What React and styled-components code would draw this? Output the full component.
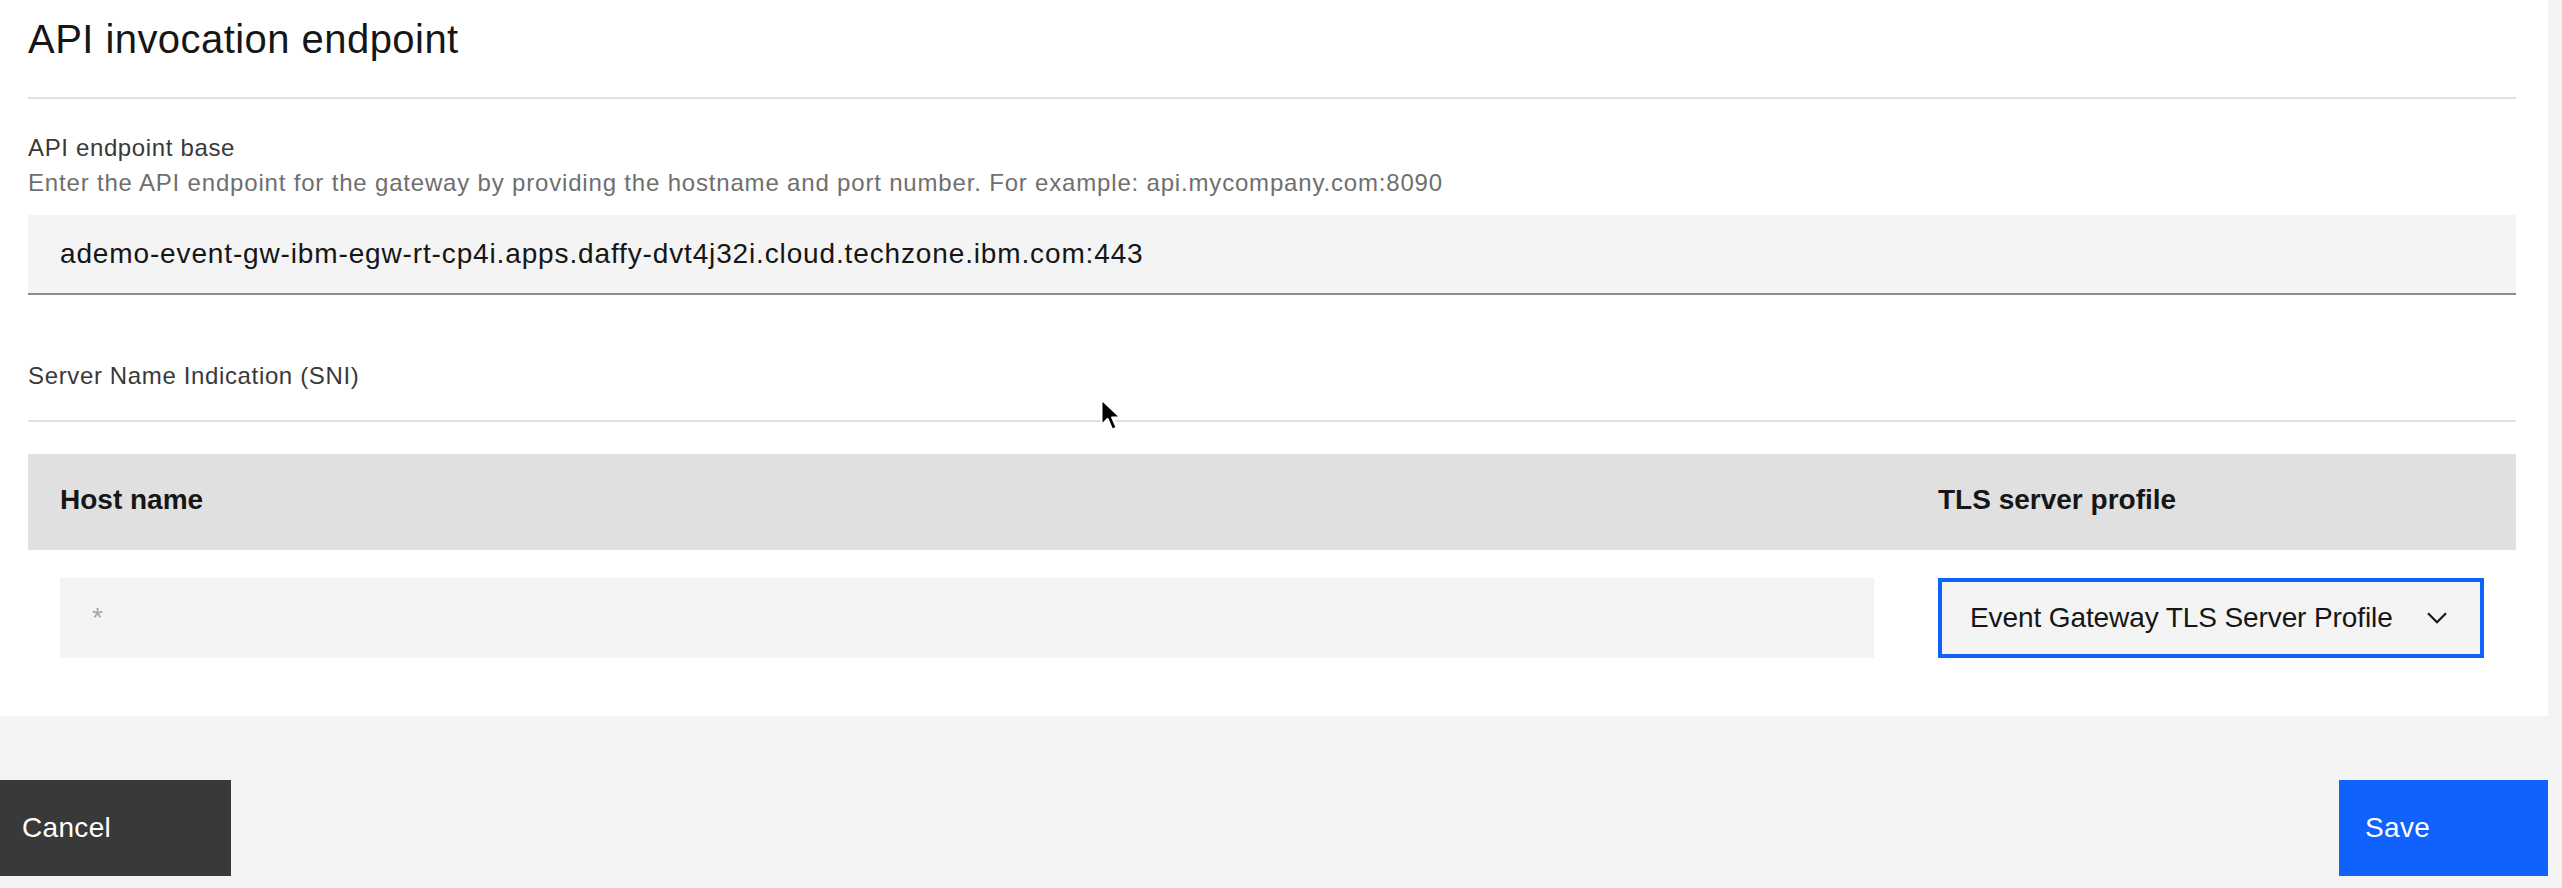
import React from "react";
import styled, { createGlobalStyle } from "styled-components";

const GlobalStyle = createGlobalStyle`
  body {
    margin: 0;
    background: #f4f4f4;
    font-family: "Liberation Sans", Arial, sans-serif;
  }
`;

const ChevronDown = () => (
  <svg width="20" height="12" viewBox="0 0 20 12" fill="none">
    <path d="M1 1.2 L10 10.2 L19 1.2" stroke="#161616" strokeWidth="2.2" />
  </svg>
);

const Pointer = () => (
  <svg width="26" height="38" viewBox="0 0 26 38">
    <path
      d="M1.5 1.5 L1.5 27 L7.6 21 L12.2 31.6 L16.6 29.7 L12.1 19.4 L20.5 19.4 Z"
      fill="#000"
      stroke="#fff"
      strokeWidth="2"
      strokeLinejoin="round"
    />
  </svg>
);

const App = () => {
  return (
    <>
      <GlobalStyle />
      <Page>
        <Panel>
          <Title>API invocation endpoint</Title>
          <Divider $top={30} />

          {/* endpoint base */}
          <Label $top={33}>API endpoint base</Label>
          <Helper>
            Enter the API endpoint for the gateway by providing the hostname and
            port number. For example: api.mycompany.com:8090
          </Helper>
          <TextInput
            readOnly
            value="ademo-event-gw-ibm-egw-rt-cp4i.apps.daffy-dvt4j32i.cloud.techzone.ibm.com:443"
          />

          {/* SNI table */}
          <Label $top={65}>Server Name Indication (SNI)</Label>
          <Divider $top={28} />
          <Table>
            <HeadCell>Host name</HeadCell>
            <HeadCell>TLS server profile</HeadCell>
            <Cell>
              <RowInput placeholder="*" />
            </Cell>
            <Cell>
              <SelectBox>
                <span>Event Gateway TLS Server Profile</span>
                <ChevronDown />
              </SelectBox>
            </Cell>
          </Table>
        </Panel>

        <Footer>
          <Button $kind="secondary" $width={231} $pad={22}>
            Cancel
          </Button>
          <Button $kind="primary" $width={209} $pad={26}>
            Save
          </Button>
        </Footer>

        <CursorMark>
          <Pointer />
        </CursorMark>
      </Page>
    </>
  );
};

const Page = styled.div`
  position: relative;
  width: 2548px;
  height: 888px;
  overflow: hidden;
`;

const Panel = styled.div`
  background: #ffffff;
  padding: 11px 32px 58px 28px;
`;

const Title = styled.h2`
  margin: 0;
  font-size: 40px;
  line-height: 56px;
  font-weight: 400;
  letter-spacing: 0.45px;
  color: #161616;
`;

const Divider = styled.div`
  margin-top: ${(p) => p.$top}px;
  height: 2px;
  background: #e0e0e0;
`;

const Label = styled.div`
  margin-top: ${(p) => p.$top}px;
  font-size: 24px;
  line-height: 32px;
  letter-spacing: 0.64px;
  color: #393939;
`;

const Helper = styled.div`
  margin-top: 3px;
  font-size: 24px;
  line-height: 32px;
  letter-spacing: 0.82px;
  color: #6f6f6f;
`;

const TextInput = styled.input`
  display: block;
  box-sizing: border-box;
  margin-top: 16px;
  width: 100%;
  height: 80px;
  padding: 0 32px;
  border: none;
  border-bottom: 2px solid #8d8d8d;
  background: #f4f4f4;
  font-family: inherit;
  font-size: 28px;
  letter-spacing: 0.86px;
  color: #161616;
  outline: none;
`;

const Table = styled.div`
  margin-top: 32px;
  display: grid;
  grid-template-columns: 1fr 610px;
`;

const HeadCell = styled.div`
  display: flex;
  align-items: center;
  box-sizing: border-box;
  height: 96px;
  padding: 0 32px 4px;
  background: #e0e0e0;
  font-size: 28px;
  font-weight: 700;
  letter-spacing: 0;
  color: #161616;
`;

const Cell = styled.div`
  padding: 28px 32px 0;
`;

const RowInput = styled.input`
  display: block;
  box-sizing: border-box;
  width: 100%;
  height: 80px;
  padding: 0 32px;
  border: none;
  background: #f4f4f4;
  font-family: inherit;
  font-size: 28px;
  color: #161616;
  outline: none;

  &::placeholder {
    color: #a8a8a8;
  }
`;

const SelectBox = styled.div`
  display: flex;
  align-items: center;
  justify-content: space-between;
  box-sizing: border-box;
  height: 80px;
  padding: 0 37px 0 32px;
  background: #f4f4f4;
  box-shadow: inset 0 0 0 4px #0f62fe;
  font-size: 28px;
  letter-spacing: -0.1px;
  color: #161616;
  cursor: pointer;
`;

const Footer = styled.div`
  display: flex;
  justify-content: space-between;
  padding-top: 64px;
`;

const Button = styled.button`
  display: flex;
  align-items: center;
  width: ${(p) => p.$width}px;
  height: 96px;
  padding: 0 0 0 ${(p) => p.$pad}px;
  border: none;
  background: ${(p) => (p.$kind === "primary" ? "#0f62fe" : "#393939")};
  font-family: inherit;
  font-size: 28px;
  letter-spacing: 0.32px;
  color: #ffffff;
  cursor: pointer;
`;

const CursorMark = styled.div`
  position: absolute;
  left: 1100px;
  top: 398px;
  pointer-events: none;
`;

export default App;
